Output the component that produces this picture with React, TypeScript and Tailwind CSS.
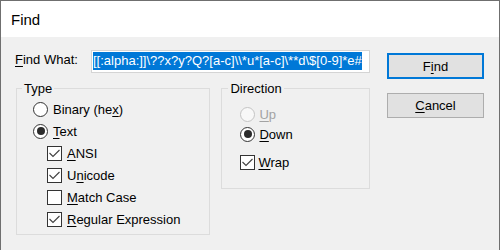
import React from "react";

const font = { fontFamily: '"Liberation Sans", Arial, sans-serif' };

function Check({ checked }: { checked: boolean }) {
  return (
    <span className="w-[15px] h-[15px] border border-[#333333] bg-white flex items-center justify-center shrink-0">
      {checked && (
        <svg width="13" height="13" viewBox="0 0 13 13">
          <path d="M1.5 6 L5 9.5 L11.5 3" stroke="#404040" strokeWidth="1.1" fill="none" />
        </svg>
      )}
    </span>
  );
}

function Radio({ checked, disabled }: { checked?: boolean; disabled?: boolean }) {
  return (
    <span
      className={
        disabled
          ? "w-[15px] h-[15px] rounded-full border border-[#c4c4c4] bg-[#f8f8f8] flex items-center justify-center shrink-0"
          : "w-[15px] h-[15px] rounded-full border border-[#333333] bg-white flex items-center justify-center shrink-0"
      }
    >
      {checked && <span className="w-[8px] h-[8px] rounded-full bg-[#2b2b2b]" />}
    </span>
  );
}

function U({ children }: { children: React.ReactNode }) {
  return <span className="underline decoration-1 underline-offset-[2px]">{children}</span>;
}

export default function App() {
  return (
    <div
      className="w-[500px] h-[250px] flex flex-col border-t border-x border-[#6f6f6f] bg-[#f0f0f0] text-black overflow-hidden text-[13px] leading-[15px]"
      style={font}
    >
      <div className="h-[36px] shrink-0 bg-white pl-[10px] pt-[10px] text-[15px] leading-[17px]">Find</div>
      <div className="flex-1 flex pl-[14px] pt-[13px]">
        <div className="w-[355px] flex flex-col">
          <div className="flex items-start">
            <div className="w-[76px] mt-[2px]">
              <U>F</U>ind What:
            </div>
            <div className="w-[279px] h-[23px] border border-[#d4d4d4] bg-white p-[1px] overflow-hidden">
              <span className="inline-block h-[18px] leading-[18px] bg-[#0078d7] text-white whitespace-nowrap">
                {"[[:alpha:]]\\??x?y?Q?[a-c]\\\\*u*[a-c]\\**d\\$[0-9]*e#"}
              </span>
            </div>
          </div>
          <div className="flex items-start mt-[8px] ml-[1px] gap-[11px]">
            <fieldset className="w-[195px] h-[154px] border border-[#dcdcdc] m-0 p-0">
              <legend className="ml-[5px] px-[2px]">Type</legend>
              <div className="flex flex-col pl-[16px] pt-[2px]">
                <div className="h-[22px] flex items-center gap-[5px]">
                  <Radio />
                  <span>
                    Binary (he<U>x</U>)
                  </span>
                </div>
                <div className="h-[22px] flex items-center gap-[5px]">
                  <Radio checked />
                  <span>
                    <U>T</U>ext
                  </span>
                </div>
                <div className="pl-[14px] flex flex-col">
                  <div className="h-[22px] flex items-center gap-[5px]">
                    <Check checked />
                    <span>
                      <U>A</U>NSI
                    </span>
                  </div>
                  <div className="h-[22px] flex items-center gap-[5px]">
                    <Check checked />
                    <span>
                      U<U>n</U>icode
                    </span>
                  </div>
                  <div className="h-[22px] flex items-center gap-[5px]">
                    <Check checked={false} />
                    <span>
                      <U>M</U>atch Case
                    </span>
                  </div>
                  <div className="h-[22px] flex items-center gap-[5px]">
                    <Check checked />
                    <span>
                      <U>R</U>egular Expression
                    </span>
                  </div>
                </div>
              </div>
            </fieldset>
            <fieldset className="w-[149px] h-[108px] border border-[#dcdcdc] m-0 p-0">
              <legend className="ml-[6px] px-[2px]">Direction</legend>
              <div className="flex flex-col pl-[18px] pt-[8px]">
                <div className="h-[20px] flex items-center gap-[4px] text-[#a3a3a3]">
                  <Radio disabled />
                  <span>
                    <U>U</U>p
                  </span>
                </div>
                <div className="h-[20px] flex items-center gap-[4px]">
                  <Radio checked />
                  <span>
                    <U>D</U>own
                  </span>
                </div>
                <div className="h-[22px] mt-[7px] flex items-center gap-[3px]">
                  <Check checked />
                  <span>
                    <U>W</U>rap
                  </span>
                </div>
              </div>
            </fieldset>
          </div>
        </div>
        <div className="ml-[17px] pt-[3px] flex flex-col gap-[14px]">
          <button className="w-[97px] h-[26px] border-2 border-[#0078d7] bg-[#e1e1e1] flex items-center justify-center">
            <span>
              F<U>i</U>nd
            </span>
          </button>
          <button className="w-[97px] h-[25px] border border-[#adadad] bg-[#e1e1e1] flex items-center justify-center">
            <span>
              <U>C</U>ancel
            </span>
          </button>
        </div>
      </div>
    </div>
  );
}
